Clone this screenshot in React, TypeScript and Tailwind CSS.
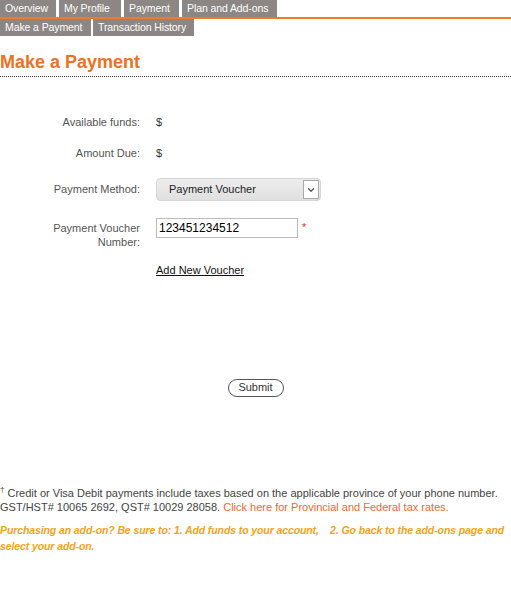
import { ChevronDown } from "lucide-react";

const font = { fontFamily: '"Liberation Sans", Arial, sans-serif' };

function Tab({ label, className = "" }: { label: string; className?: string }) {
  return (
    <div
      className={`shrink-0 whitespace-nowrap overflow-hidden bg-[#8c8784] text-white text-[10.5px] tracking-[-0.1px] leading-[17px] h-[17px] px-[5px] ${className}`}
    >
      {label}
    </div>
  );
}

export default function App() {
  return (
    <div className="w-[511px] h-[590px] bg-white text-[11px]" style={font}>
      {/* tabs */}
      <div className="flex gap-[3px] border-b-2 border-[#f07a2a]">
        <Tab label="Overview" className="w-[56px]" />
        <Tab label="My Profile" className="w-[62px]" />
        <Tab label="Payment" className="w-[55px]" />
        <Tab label="Plan and Add-ons" className="w-[95px]" />
      </div>
      <div className="flex gap-[2px]">
        <Tab label="Make a Payment" className="w-[91px] h-[16px] leading-[16px]" />
        <Tab label="Transaction History" className="w-[101px] h-[16px] leading-[16px]" />
      </div>

      {/* title */}
      <h1 className="mt-[15px] text-[18px] leading-[22px] font-bold text-[#f06f22]">Make a Payment</h1>
      <div className="mt-[3px] border-b border-dotted border-[#333]" />

      {/* form */}
      <div className="mt-[38px] grid grid-cols-[140px_1fr] gap-x-[16px] text-[#555]">
        <div className="text-right leading-[14px]">Available funds:</div>
        <div className="leading-[14px] text-[#333]">$</div>

        <div className="mt-[17px] text-right leading-[14px]">Amount Due:</div>
        <div className="mt-[17px] leading-[14px] text-[#333]">$</div>

        <div className="mt-[18px] text-right leading-[22px]">Payment Method:</div>
        <div className="mt-[18px]">
          <div className="w-[165px] h-[23px] rounded-[4px] bg-gradient-to-b from-[#ededed] to-[#e0e0e0] border border-[#d6d6d6] flex items-center justify-between pl-[12px] text-[#222]">
            <span>Payment Voucher</span>
            <span className="w-[16px] h-[19px] mr-[1px] bg-white border border-[#aaa] flex items-center justify-center">
              <ChevronDown size={10} strokeWidth={3} className="text-[#555]" />
            </span>
          </div>
        </div>

        <div className="mt-[17px] text-right leading-[14px] pt-[3px]">
          Payment Voucher
          <br />
          Number:
        </div>
        <div className="mt-[17px] flex items-start gap-[4px]">
          <input
            type="text"
            defaultValue="123451234512"
            className="w-[142px] h-[20px] border border-[#bbb] px-[2px] text-[12px] text-black outline-none"
            style={font}
          />
          <span className="text-[#e8312a] leading-[18px]">*</span>
        </div>

        <div />
        <div className="mt-[13px]">
          <a href="#" className="text-[#111] underline">Add New Voucher</a>
        </div>
      </div>

      <div className="mt-[100px] flex justify-center">
        <button className="w-[56px] h-[18px] rounded-full border border-[#555] bg-white text-[11px] leading-[15px] text-[#333]" style={font}>
          Submit
        </button>
      </div>

      {/* footer */}
      <div className="mt-[89px] text-[#444] pr-[4px]">
        <p className="leading-[14px]">
          <span className="align-top text-[8px] leading-[8px]">†</span> Credit or Visa Debit payments include taxes based on the applicable province of your phone number.
          GST/HST# 10065 2692, QST# 10029 28058.{" "}
          <a href="#" className="text-[#f06a30]">Click here for Provincial and Federal tax rates.</a>
        </p>
        <p className="mt-[8px] leading-[16px] italic font-bold text-[#f5a313] text-[10.5px] tracking-[-0.1px]">
          Purchasing an add-on? Be sure to: 1. Add funds to your account,&nbsp;&nbsp;&nbsp; 2. Go back to the add-ons page and select your add-on.
        </p>
      </div>
    </div>
  );
}
